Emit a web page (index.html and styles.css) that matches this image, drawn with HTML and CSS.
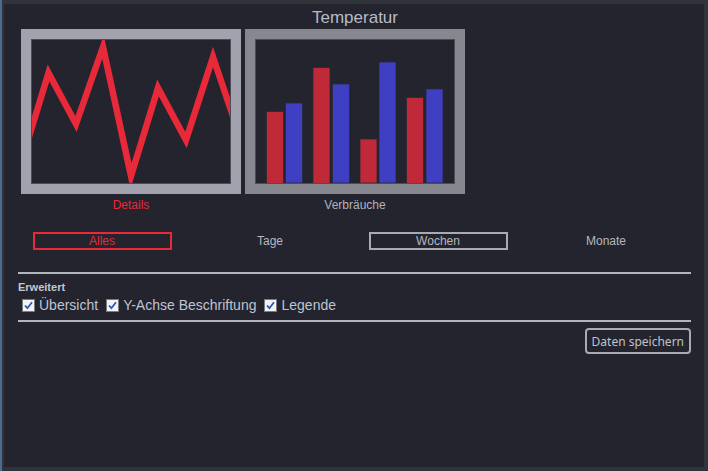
FILE: index.html
```html
<!DOCTYPE html>
<html lang="de">
<head>
    <meta charset="UTF-8">
    <title>Temperatur</title>
    <link rel="stylesheet" href="styles.css">
</head>
<body>
    <div class="panel">
        <h1 class="title">Temperatur</h1>

        <div class="tiles">
            <div class="tile-wrap">
                <div class="tile tile-active">
                    <svg class="chart" viewBox="0 0 198 143" preserveAspectRatio="none">
                        <polyline points="-11,123 16.5,33 44,84 71,7 99,136 126,48 154,100 181,17 209,100"
                                  fill="none" stroke="#e8293a" stroke-width="6.5" stroke-linejoin="miter"/>
                    </svg>
                </div>
                <div class="caption caption-active">Details</div>
            </div>
            <div class="tile-wrap">
                <div class="tile">
                    <svg class="chart" viewBox="0 0 198 143" preserveAspectRatio="none">
                        <g stroke="#2a2a36" stroke-width="0.8">
                            <rect x="10.5" y="71.5" width="17" height="72" fill="#c02a38"/>
                            <rect x="29.5" y="63" width="17" height="80" fill="#3f3fc4"/>
                            <rect x="57" y="27.5" width="17" height="116" fill="#c02a38"/>
                            <rect x="76.5" y="44" width="17" height="99" fill="#3f3fc4"/>
                            <rect x="104" y="99" width="17" height="44" fill="#c02a38"/>
                            <rect x="123" y="22" width="17" height="121" fill="#3f3fc4"/>
                            <rect x="150.5" y="57.5" width="17" height="86" fill="#c02a38"/>
                            <rect x="170" y="49" width="17" height="94" fill="#3f3fc4"/>
                        </g>
                    </svg>
                </div>
                <div class="caption">Verbräuche</div>
            </div>
        </div>

        <div class="ranges">
            <div class="range"><span class="range-box range-selected">Alles</span></div>
            <div class="range"><span class="range-box">Tage</span></div>
            <div class="range"><span class="range-box range-framed">Wochen</span></div>
            <div class="range"><span class="range-box">Monate</span></div>
        </div>

        <hr class="rule rule-top">

        <div class="section-title">Erweitert</div>
        <div class="options">
            <label class="option">
                <svg class="check" viewBox="0 0 13 13"><rect x="0.5" y="0.5" width="12" height="12" fill="#f3f3f3" stroke="#7a7a80"/><path d="M3 6.5 L5.4 9.2 L10 3.2" fill="none" stroke="#2556c6" stroke-width="1.8"/></svg>
                Übersicht
            </label>
            <label class="option">
                <svg class="check" viewBox="0 0 13 13"><rect x="0.5" y="0.5" width="12" height="12" fill="#f3f3f3" stroke="#7a7a80"/><path d="M3 6.5 L5.4 9.2 L10 3.2" fill="none" stroke="#2556c6" stroke-width="1.8"/></svg>
                Y-Achse Beschriftung
            </label>
            <label class="option">
                <svg class="check" viewBox="0 0 13 13"><rect x="0.5" y="0.5" width="12" height="12" fill="#f3f3f3" stroke="#7a7a80"/><path d="M3 6.5 L5.4 9.2 L10 3.2" fill="none" stroke="#2556c6" stroke-width="1.8"/></svg>
                Legende
            </label>
        </div>

        <hr class="rule rule-bottom">

        <div class="actions">
            <button class="save">Daten speichern</button>
        </div>
    </div>
</body>
</html>
```

FILE: styles.css
```css
html {
    background: #30323c;
}
body {
    margin: 0;
    padding: 4px 4px 4px 2px;
    border-left: 2px solid #4d6a8c;
    font-family: "Liberation Sans", Arial, sans-serif;
    color: #b5b8c4;
}
.panel {
    background: #23242d;
    height: 463px;
    box-sizing: border-box;
    padding: 0 12px 0 14px;
    display: flex;
    flex-direction: column;
}
.title {
    margin: 2px 0 0 0;
    font-size: 17px;
    font-weight: normal;
    line-height: 23px;
    text-align: center;
    color: #b6bbca;
}
.tiles {
    display: flex;
    gap: 4px;
    margin-left: 3px;
}
.tile {
    width: 220px;
    height: 165px;
    box-sizing: border-box;
    border: 10px solid #87878f;
    background: #23242d;
}
.tile-active {
    border-color: #a1a2ae;
}
.chart {
    display: block;
    width: 198px;
    height: 143px;
    border: 1px solid #4c4d57;
    overflow: hidden;
}
.caption {
    margin-top: 4px;
    font-size: 12px;
    line-height: 14px;
    text-align: center;
    color: #b0b2ba;
}
.caption-active {
    color: #e8293a;
}
.ranges {
    display: grid;
    grid-template-columns: repeat(4, 1fr);
    margin-top: 20px;
    width: 672px;
}
.range {
    display: flex;
    justify-content: center;
}
.range-box {
    width: 139px;
    box-sizing: border-box;
    border: 2px solid transparent;
    font-size: 12px;
    line-height: 14px;
    text-align: center;
    color: #b5b7c0;
}
.range-selected {
    border-color: #e8293a;
    color: #e8293a;
}
.range-framed {
    border-color: #a8aab4;
}
.rule {
    border: none;
    height: 2px;
    background: #b4b6be;
    margin: 0;
    width: 673px;
}
.rule-top {
    margin-top: 22px;
}
.section-title {
    margin-top: 6px;
    font-size: 11px;
    font-weight: bold;
    line-height: 14px;
    color: #c6c8d0;
}
.options {
    display: flex;
    gap: 8px;
    margin-left: 4px;
    margin-top: 2px;
}
.option {
    display: flex;
    align-items: center;
    gap: 4px;
    font-size: 14px;
    line-height: 18px;
    color: #bfc3d2;
}
.check {
    width: 13px;
    height: 13px;
}
.rule-bottom {
    margin-top: 6px;
}
.actions {
    display: flex;
    justify-content: flex-end;
    margin-top: 6px;
    width: 673px;
}
.save {
    height: 26px;
    padding: 0 5px;
    background: #23242d;
    border: 2px solid #a8aab4;
    border-radius: 4px;
    font-family: "Noto Sans", sans-serif;
    font-size: 12px;
    color: #c0c2cc;
}
```
